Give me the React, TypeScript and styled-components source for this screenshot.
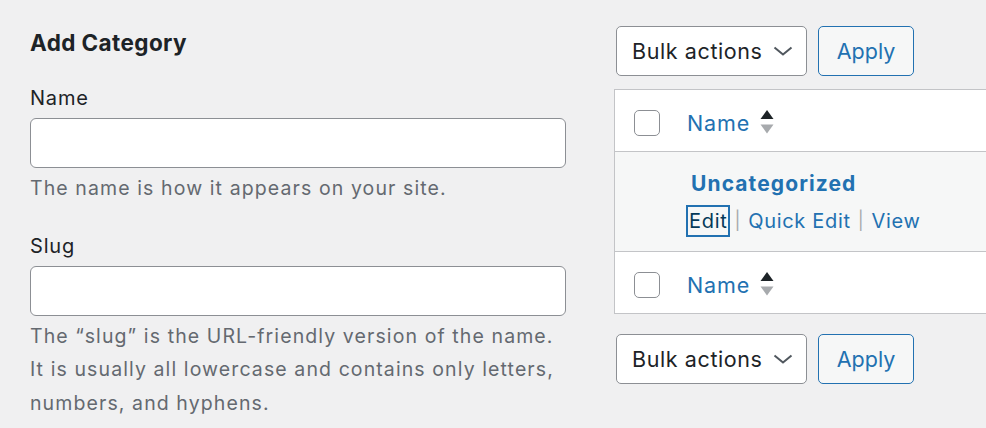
import React from "react";
import styled, { createGlobalStyle } from "styled-components";

const GlobalStyle = createGlobalStyle`
  html, body {
    margin: 0;
    padding: 0;
    background: #f0f0f1;
    overflow: hidden;
  }
  body {
    font-family: Inter, "Noto Sans", "Liberation Sans", sans-serif;
    color: #1d2327;
  }
`;

const Page = styled.div`
  display: flex;
  gap: 48px;
  padding-left: 30px;
  width: 1200px;
`;

const FormCol = styled.div`
  flex: 0 0 536px;
`;

const Heading = styled.h2`
  margin: 28px 0 0;
  font-size: 22.5px;
  line-height: 30px;
  font-weight: 700;
  letter-spacing: 0.4px;
  color: #1d2327;
`;

const Field = styled.div`
  margin-top: 26px;
`;

const Label = styled.label`
  display: block;
  font-size: 20px;
  line-height: 28px;
  letter-spacing: 0.8px;
  margin-bottom: 6px;
`;

const TextInput = styled.input`
  display: block;
  box-sizing: border-box;
  width: 536px;
  height: 50px;
  margin: 0;
  border: 1px solid #8c8f94;
  border-radius: 6px;
  background: #fff;
  font: inherit;
  font-size: 20px;
  padding: 0 12px;
`;

const Help = styled.p`
  margin: 4px 0 0;
  font-size: 19.5px;
  line-height: 33.5px;
  letter-spacing: 1.1px;
  color: #646970;
`;

const ListCol = styled.div`
  flex: 0 0 560px;
`;

const TableNav = styled.div<{ $bottom?: boolean }>`
  display: flex;
  gap: 11px;
  padding-left: 2px;
  margin-top: ${(p) => (p.$bottom ? "20px" : "26px")};
`;

const SelectBox = styled.div`
  box-sizing: border-box;
  width: 191px;
  height: 50px;
  display: flex;
  align-items: center;
  justify-content: space-between;
  padding: 0 13px 0 15px;
  background: #fff;
  border: 1px solid #8c8f94;
  border-radius: 5px;
  font-size: 21.5px;
  letter-spacing: 0.6px;
  color: #1d2327;
`;

const ApplyButton = styled.button`
  box-sizing: border-box;
  width: 96px;
  height: 50px;
  background: #f6f7f7;
  border: 1px solid #2271b1;
  border-radius: 5px;
  color: #2271b1;
  font: inherit;
  font-size: 21.5px;
  padding: 0;
`;

const Table = styled.div`
  margin-top: 13px;
  background: #fff;
  border: 1px solid #c3c4c7;
`;

const Row = styled.div<{ $striped?: boolean; $h: number; $last?: boolean }>`
  display: flex;
  height: ${(p) => p.$h}px;
  background: ${(p) => (p.$striped ? "#f6f7f7" : "#fff")};
  border-bottom: ${(p) => (p.$last ? "none" : "1px solid #c3c4c7")};
`;

const CheckCell = styled.div`
  flex: 0 0 72px;
  box-sizing: border-box;
  padding: 20px 0 0 19px;
`;

const Checkbox = styled.span`
  display: block;
  box-sizing: border-box;
  width: 26px;
  height: 26px;
  border: 1px solid #8c8f94;
  border-radius: 5px;
  background: #fff;
`;

const HeadCell = styled.div`
  display: flex;
  align-items: flex-start;
  gap: 10px;
  padding-top: 18px;
`;

const SortLink = styled.a`
  color: #2271b1;
  font-size: 21.5px;
  line-height: 30px;
  letter-spacing: 0.9px;
  text-decoration: none;
`;

const NameCell = styled.div`
  padding: 17px 0 0 4px;
`;

const TermName = styled.a`
  display: block;
  color: #2271b1;
  font-weight: 700;
  font-size: 21px;
  line-height: 30px;
  letter-spacing: 1.1px;
  text-decoration: none;
`;

const Actions = styled.div`
  display: flex;
  align-items: center;
  margin-top: 6px;
  margin-left: -5px;
  font-size: 20px;
  line-height: 28px;
  letter-spacing: 0.7px;
`;

const ActionLink = styled.a<{ $focus?: boolean }>`
  color: ${(p) => (p.$focus ? "#043959" : "#2271b1")};
  text-decoration: none;
  padding: 2px 3px;
  box-shadow: ${(p) => (p.$focus ? "inset 0 0 0 2px #2271b1" : "none")};
`;

const Sep = styled.span`
  color: #a7aaad;
  font-size: 18px;
  padding: 0 4px 0 4px;
`;

const Chevron = () => (
  <svg width="20" height="10" viewBox="0 0 20 10" fill="none">
    <path d="M1.5 1.5 L10 8.5 L18.5 1.5" stroke="#50575e" strokeWidth="2" />
  </svg>
);

const SortArrows = () => (
  <svg width="14" height="26" viewBox="0 0 14 26" style={{ marginTop: 2 }}>
    <path d="M7 0 L13.5 9 L0.5 9 Z" fill="#1d2327" />
    <path d="M0.5 14.5 L13.5 14.5 L7 23.5 Z" fill="#a7aaad" />
  </svg>
);

function BulkNav({ bottom }: { bottom?: boolean }) {
  return (
    <TableNav $bottom={bottom}>
      <SelectBox>
        <span>Bulk actions</span>
        <Chevron />
      </SelectBox>
      <ApplyButton>Apply</ApplyButton>
    </TableNav>
  );
}

function HeaderRow({ last }: { last?: boolean }) {
  return (
    <Row $h={61} $last={last}>
      <CheckCell>
        <Checkbox />
      </CheckCell>
      <HeadCell>
        <SortLink href="#">Name</SortLink>
        <SortArrows />
      </HeadCell>
    </Row>
  );
}

export default function App() {
  return (
    <>
      <GlobalStyle />
      <Page>
        <FormCol>
          <Heading>Add Category</Heading>
          <Field>
            <Label>Name</Label>
            <TextInput type="text" />
            <Help>The name is how it appears on your site.</Help>
          </Field>
          <Field>
            <Label>Slug</Label>
            <TextInput type="text" />
            <Help>
              The “slug” is the URL-friendly version of the name.
              <br />
              It is usually all lowercase and contains only letters,
              <br />
              numbers, and hyphens.
            </Help>
          </Field>
        </FormCol>
        <ListCol>
          <BulkNav />
          <Table>
            <HeaderRow />
            <Row $h={99} $striped>
              <CheckCell />
              <NameCell>
                <TermName href="#">Uncategorized</TermName>
                <Actions>
                  <ActionLink href="#" $focus>
                    Edit
                  </ActionLink>
                  <Sep>|</Sep>
                  <ActionLink href="#">Quick Edit</ActionLink>
                  <Sep>|</Sep>
                  <ActionLink href="#">View</ActionLink>
                </Actions>
              </NameCell>
            </Row>
            <HeaderRow last />
          </Table>
          <BulkNav bottom />
        </ListCol>
      </Page>
    </>
  );
}
